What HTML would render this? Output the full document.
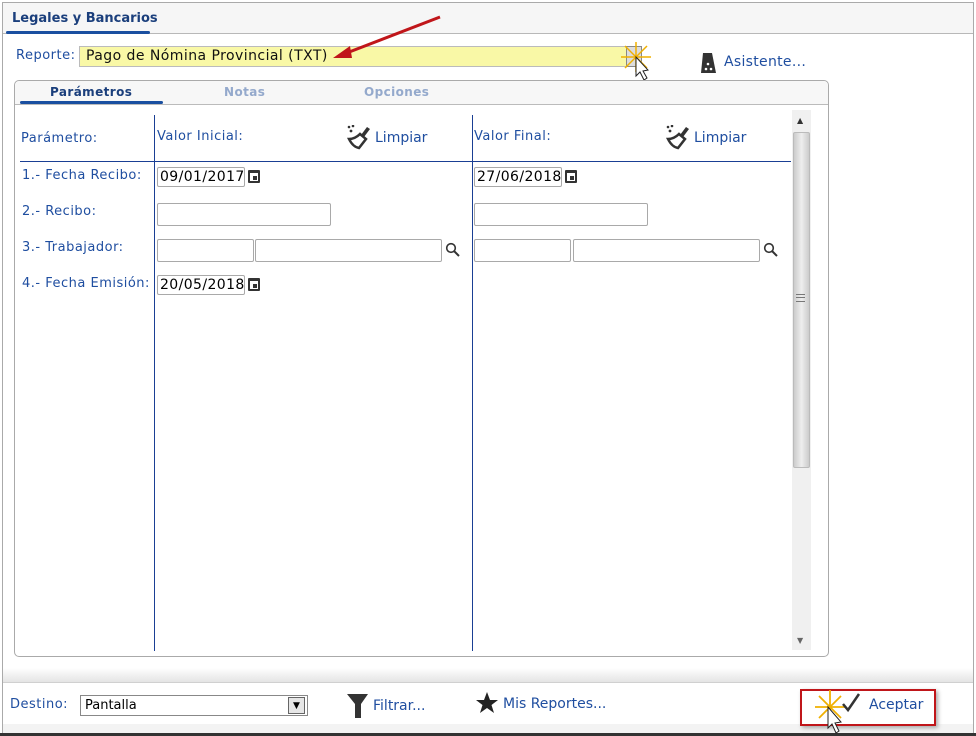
<!DOCTYPE html>
<html><head><meta charset="utf-8"><style>
*{margin:0;padding:0;box-sizing:border-box}
body{width:976px;height:736px;background:#fff;font-family:"DejaVu Sans","Liberation Sans",sans-serif;position:relative;overflow:hidden;color:#1a4a9a}
.a{position:absolute}
.t{font-size:13px;color:#1f4ea0;white-space:nowrap;letter-spacing:0.5px}
.inp{position:absolute;border:1px solid #a9a9a9;border-radius:2px;background:#fff;height:23px;font-size:14px;color:#000;padding:2px 2px;white-space:nowrap;overflow:hidden}
.cal{position:absolute;width:12px;height:13px;border:2px solid #333;border-top-width:3px;border-radius:1px}
.cal:after{content:"";position:absolute;right:1px;bottom:1px;width:4px;height:4px;background:#333}
</style></head><body>
<div class="a" style="left:2px;top:2px;width:972px;height:733px;border:1px solid #aaa;border-bottom:none;background:#fff"></div>
<div class="a" style="left:3px;top:3px;width:970px;height:31px;background:#f6f6f6;border-bottom:1px solid #b8b8b8"></div>
<div class="a" style="left:12px;top:11px;font-size:13px;font-weight:bold;color:#1b3f7c">Legales y Bancarios</div>
<div class="a" style="left:6px;top:31px;width:144px;height:3px;background:#1a4fa0;border-radius:2px"></div>

<div class="a t" style="left:16px;top:48px">Reporte:</div>
<div class="a" style="left:79px;top:46px;width:563px;height:21px;background:#f9f8a6;border:1px solid #bbb;font-size:14px;color:#111;padding:1px 6px;letter-spacing:0.45px">Pago de Nómina Provincial (TXT)</div>
<div class="a" style="left:626px;top:46px;width:16px;height:21px;border:1px solid #888;background:#ddd"></div>
<svg class="a" style="left:615px;top:40px" width="45" height="45"><g stroke="#f0b000" stroke-width="1.5"><line x1="21" y1="2" x2="21" y2="32"/><line x1="6" y1="17" x2="36" y2="17"/><line x1="10" y1="6" x2="32" y2="28"/><line x1="32" y1="6" x2="10" y2="28"/></g><path d="M21 17 L21 36 L25 32 L29 40 L32 38 L28 31 L33 30 Z" fill="#fff" stroke="#222"/></svg>
<svg class="a" style="left:700px;top:52px" width="17" height="22"><path d="M3 1 H12 L16 21 H1 Z" fill="#333"/><circle cx="8" cy="12" r="1.3" fill="#fff"/><circle cx="6" cy="17" r="1.3" fill="#fff"/><circle cx="11" cy="17" r="1.3" fill="#fff"/></svg>
<div class="a" style="left:724px;top:54px;font-size:14px;color:#1f4ea0;letter-spacing:0.3px">Asistente...</div>

<div class="a" style="left:14px;top:80px;width:815px;height:577px;border:1px solid #aaa;border-radius:5px;background:#fff"></div>
<div class="a" style="left:15px;top:81px;width:813px;height:24px;background:#f7f7f7;border-bottom:1px solid #bbb;border-radius:5px 5px 0 0"></div>
<div class="a" style="left:50px;top:85px;font-size:12px;font-weight:bold;color:#1b3f7c;letter-spacing:0.4px">Parámetros</div>
<div class="a" style="left:224px;top:85px;font-size:12px;font-weight:bold;color:#94a9cc;letter-spacing:0.4px">Notas</div>
<div class="a" style="left:364px;top:85px;font-size:12px;font-weight:bold;color:#94a9cc;letter-spacing:0.4px">Opciones</div>
<div class="a" style="left:20px;top:101px;width:143px;height:3px;background:#1a4fa0;border-radius:2px"></div>

<div class="a" style="left:792px;top:110px;width:19px;height:540px;background:#f0f0f0"></div>
<div class="a" style="left:793px;top:132px;width:17px;height:336px;background:linear-gradient(90deg,#ccc,#eee,#ccc);border:1px solid #bbb;border-radius:2px"></div>
<div class="a" style="left:797px;top:116px;font-size:8px;color:#333">▲</div>
<div class="a" style="left:797px;top:636px;font-size:8px;color:#666">▼</div>
<div class="a" style="left:796px;top:294px;width:9px;height:8px;border-top:1px solid #777;border-bottom:1px solid #777"><div style="margin-top:2px;border-top:1px solid #777"></div></div>

<div class="a" style="left:154px;top:115px;width:1px;height:536px;background:#1a3f94"></div>
<div class="a" style="left:472px;top:115px;width:1px;height:536px;background:#1a3f94"></div>
<div class="a" style="left:20px;top:161px;width:771px;height:1px;background:#1a3f94"></div>

<div class="a t" style="left:21px;top:131px">Parámetro:</div>
<div class="a t" style="left:157px;top:129px">Valor Inicial:</div>
<div class="a t" style="left:474px;top:129px">Valor Final:</div>
<svg class="a" style="left:347px;top:125px" width="26" height="26"><circle cx="2" cy="2" r="1.3" fill="#333"/><circle cx="6" cy="1" r="1.3" fill="#333"/><circle cx="4" cy="6" r="1.4" fill="#333"/><path d="M20 2 L23 4 L17 12 L14 10Z" fill="#333"/><path d="M13 9 L19 14 L12 23 Q6 22 2 14 Q8 14 13 9Z" fill="none" stroke="#333" stroke-width="2.5"/></svg>
<div class="a" style="left:375px;top:130px;font-size:14px;color:#1f4ea0">Limpiar</div>
<svg class="a" style="left:666px;top:125px" width="26" height="26"><circle cx="2" cy="2" r="1.3" fill="#333"/><circle cx="6" cy="1" r="1.3" fill="#333"/><circle cx="4" cy="6" r="1.4" fill="#333"/><path d="M20 2 L23 4 L17 12 L14 10Z" fill="#333"/><path d="M13 9 L19 14 L12 23 Q6 22 2 14 Q8 14 13 9Z" fill="none" stroke="#333" stroke-width="2.5"/></svg>
<div class="a" style="left:694px;top:130px;font-size:14px;color:#1f4ea0">Limpiar</div>

<div class="a t" style="left:22px;top:168px">1.- Fecha Recibo:</div>
<div class="a t" style="left:22px;top:204px">2.- Recibo:</div>
<div class="a t" style="left:22px;top:240px">3.- Trabajador:</div>
<div class="a t" style="left:22px;top:276px">4.- Fecha Emisión:</div>

<div class="inp" style="left:157px;top:167px;width:88px;height:20px;padding:1px 2px;letter-spacing:0.4px">09/01/2017</div><div class="cal" style="left:248px;top:170px"></div>
<div class="inp" style="left:474px;top:167px;width:88px;height:20px;padding:1px 2px;letter-spacing:0.4px">27/06/2018</div><div class="cal" style="left:565px;top:170px"></div>
<div class="inp" style="left:157px;top:203px;width:174px"></div>
<div class="inp" style="left:474px;top:203px;width:174px"></div>
<div class="inp" style="left:157px;top:239px;width:97px"></div><div class="inp" style="left:255px;top:239px;width:187px"></div>
<div class="inp" style="left:474px;top:239px;width:97px"></div><div class="inp" style="left:573px;top:239px;width:187px"></div>
<svg class="a" style="left:445px;top:242px" width="16" height="16"><circle cx="6" cy="6" r="4.3" fill="none" stroke="#333" stroke-width="1.6"/><line x1="9" y1="9" x2="14" y2="14" stroke="#333" stroke-width="2"/></svg>
<svg class="a" style="left:763px;top:242px" width="16" height="16"><circle cx="6" cy="6" r="4.3" fill="none" stroke="#333" stroke-width="1.6"/><line x1="9" y1="9" x2="14" y2="14" stroke="#333" stroke-width="2"/></svg>
<div class="inp" style="left:157px;top:275px;width:88px;height:20px;padding:1px 2px;letter-spacing:0.4px">20/05/2018</div><div class="cal" style="left:248px;top:278px"></div>

<svg class="a" style="left:330px;top:14px" width="115" height="50"><line x1="110" y1="3" x2="14" y2="40" stroke="#c0161a" stroke-width="3"/><path d="M3 44 L20 32 L22 44Z" fill="#c0161a"/></svg>

<div class="a" style="left:3px;top:668px;width:970px;height:14px;background:linear-gradient(#fff,#e4e4e4)"></div>
<div class="a" style="left:3px;top:682px;width:970px;height:1px;background:#d0d0d0"></div>
<div class="a" style="left:0;top:733px;width:976px;height:3px;background:#333"></div>
<div class="a" style="left:3px;top:724px;width:970px;height:9px;background:#f3f3f3"></div>

<div class="a t" style="left:10px;top:697px">Destino:</div>
<div class="a" style="left:80px;top:695px;width:228px;height:21px;border:1px solid #888;background:#fff;font-size:13px;color:#000;padding:2px 4px">Pantalla</div>
<div class="a" style="left:288px;top:697px;width:17px;height:17px;border:1px solid #666;background:#e6e6e6;font-size:9px;color:#000;text-align:center;line-height:16px">▼</div>
<svg class="a" style="left:346px;top:693px" width="24" height="26"><path d="M1 1 H22 L15 11 V25 H9 V11Z" fill="#333"/></svg>
<div class="a" style="left:373px;top:698px;font-size:14px;color:#1f4ea0">Filtrar...</div>
<svg class="a" style="left:476px;top:692px" width="22" height="22"><path d="M11 0 L14 8 L22 8 L15.5 13 L18 21 L11 16 L4 21 L6.5 13 L0 8 L8 8Z" fill="#222"/></svg>
<div class="a" style="left:503px;top:696px;font-size:14px;color:#1f4ea0">Mis Reportes...</div>

<div class="a" style="left:800px;top:689px;width:136px;height:37px;border:2px solid #c0161a;box-shadow:2px 2px 4px #aaa;background:#fff"></div>
<svg class="a" style="left:813px;top:690px" width="55" height="45"><g stroke="#f0b000" stroke-width="1.8"><line x1="17" y1="0" x2="17" y2="34"/><line x1="2" y1="17" x2="32" y2="17"/><line x1="6" y1="6" x2="28" y2="28"/><line x1="28" y1="6" x2="6" y2="28"/></g><path d="M30 14 L35 20 L46 4" fill="none" stroke="#333" stroke-width="2.5"/><path d="M15 17 L15 38 L19 34 L23 43 L26 41 L22 33 L28 32 Z" fill="#fff" stroke="#222"/></svg>
<div class="a" style="left:869px;top:697px;font-size:14px;color:#1f4ea0">Aceptar</div>
</body></html>
